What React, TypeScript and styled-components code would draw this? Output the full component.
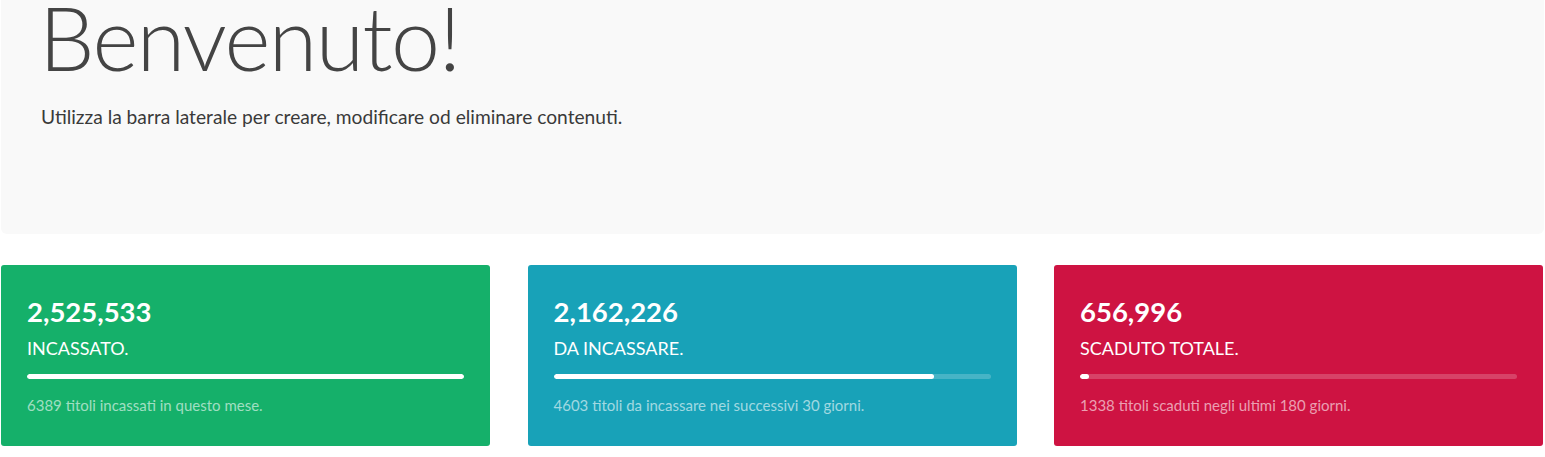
import React from "react";
import styled, { createGlobalStyle } from "styled-components";

const Global = createGlobalStyle`
  html, body { margin: 0; padding: 0; background: #fff; }
  body { font-family: "Lato", "Liberation Sans", sans-serif; overflow: hidden; }
  * { box-sizing: border-box; }
`;

const Page = styled.div`
  padding: 0 1px;
  width: 1545px;
`;

const Jumbotron = styled.section`
  background: #f9f9f9;
  border-radius: 0 0 6px 6px;
  height: 234px;
  padding: 2px 40px 0;
  overflow: hidden;
`;

const Title = styled.h1`
  margin: 0 0 0 -2px;
  font-family: "Lato", sans-serif;
  font-weight: 300;
  font-size: 88px;
  line-height: 0.8;
  color: #444;
  letter-spacing: -1.5px;
`;

const Lead = styled.p`
  margin: 33px 0 0;
  font-size: 19.2px;
  line-height: 24px;
  color: #3a3a3a;
`;

const Row = styled.div`
  display: grid;
  grid-template-columns: repeat(3, 489px);
  column-gap: 37.5px;
  margin-top: 31px;
`;

const Card = styled.div<{ $bg: string }>`
  background: ${(p) => p.$bg};
  border-radius: 3px;
  height: 181px;
  padding: 29px 26px 0;
  color: #fff;
`;

const Value = styled.div`
  font-weight: 700;
  font-size: 27.5px;
  line-height: 36px;
`;

const Label = styled.div`
  font-size: 18px;
  line-height: 24px;
  margin-top: 6px;
`;

const Track = styled.div`
  height: 5px;
  border-radius: 3px;
  background: rgba(255, 255, 255, 0.2);
  margin-top: 14px;
  overflow: hidden;
`;

const Fill = styled.div`
  height: 100%;
  background: #fff;
  border-radius: 3px;
`;

const Note = styled.div`
  font-size: 15px;
  line-height: 20px;
  margin-top: 16px;
  color: rgba(255, 255, 255, 0.6);
`;

const cards = [
  { bg: "#15b06a", value: "2,525,533", label: "INCASSATO.", pct: 100, note: "6389 titoli incassati in questo mese." },
  { bg: "#18a2b8", value: "2,162,226", label: "DA INCASSARE.", pct: 87, note: "4603 titoli da incassare nei successivi 30 giorni." },
  { bg: "#ce1342", value: "656,996", label: "SCADUTO TOTALE.", pct: 2, note: "1338 titoli scaduti negli ultimi 180 giorni." },
];

export default function App() {
  return (
    <Page>
      <Global />
      <Jumbotron>
        <Title>Benvenuto!</Title>
        <Lead>Utilizza la barra laterale per creare, modificare od eliminare contenuti.</Lead>
      </Jumbotron>
      <Row>
        {cards.map((c) => (
          <Card key={c.label} $bg={c.bg}>
            <Value>{c.value}</Value>
            <Label>{c.label}</Label>
            <Track>
              <Fill style={{ width: `${c.pct}%` }} />
            </Track>
            <Note>{c.note}</Note>
          </Card>
        ))}
      </Row>
    </Page>
  );
}
